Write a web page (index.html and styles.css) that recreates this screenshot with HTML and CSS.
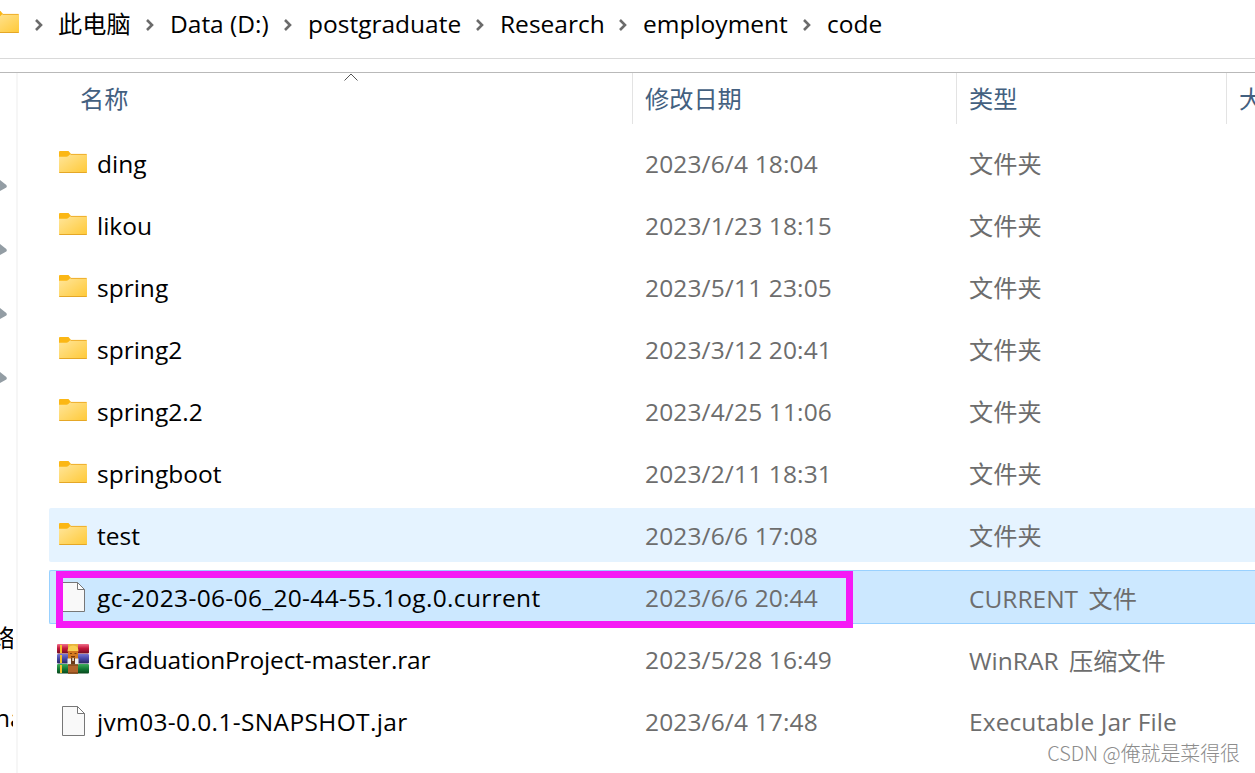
FILE: index.html
```html
<!DOCTYPE html>
<html lang="zh-CN">
<head>
    <meta charset="UTF-8">
    <title>code</title>
    <link rel="stylesheet" href="styles.css">
</head>
<body>
    <svg class="defs" width="0" height="0">
        <defs>
            <linearGradient id="folderFill" x1="0" y1="0" x2="1" y2="1">
                <stop offset="0" stop-color="#ffe69c"/>
                <stop offset="1" stop-color="#ffc937"/>
            </linearGradient>
            <linearGradient id="bookRed" x1="0" y1="0" x2="0" y2="1">
                <stop offset="0" stop-color="#f0708a"/>
                <stop offset="0.45" stop-color="#c4183c"/>
                <stop offset="1" stop-color="#6e0c20"/>
            </linearGradient>
            <linearGradient id="bookBlue" x1="0" y1="0" x2="0" y2="1">
                <stop offset="0" stop-color="#7676d2"/>
                <stop offset="0.5" stop-color="#4545a5"/>
                <stop offset="1" stop-color="#26265c"/>
            </linearGradient>
            <linearGradient id="bookGreen" x1="0" y1="0" x2="0" y2="1">
                <stop offset="0" stop-color="#3fae5c"/>
                <stop offset="0.5" stop-color="#137a35"/>
                <stop offset="1" stop-color="#07461c"/>
            </linearGradient>
        </defs>
        <symbol id="folder" viewBox="0 0 32 32">
            <path d="M2 15V5.5Q2 5 3 5h8.5l2.5 3-2.5 3z" fill="#fbb715"/>
            <path d="M2 10.7h7.5q1 0 1.8-.8l1.3-1.2q.7-.7 1.6-.7H29q1 0 1 1v17q0 1-1 1H3q-1 0-1-1z" fill="url(#folderFill)"/>
            <path d="M13.5 8.4H29.6" stroke="#efae2b" stroke-width="1"/>
            <path d="M2.3 26.5h27.4" stroke="#e5a726" stroke-width="1"/>
        </symbol>
        <symbol id="file" viewBox="0 0 32 32">
            <path d="M5.5 2.5h15l7 7v22h-22z" fill="#f9f9f9" stroke="#777" stroke-width="1"/>
            <path d="M20.5 2.5v7h7z" fill="#fff" stroke="#777" stroke-width="1"/>
        </symbol>
        <symbol id="rar" viewBox="0 0 32 32">
            <rect x="0" y="2" width="32" height="9.6" rx="1" fill="url(#bookRed)"/>
            <rect x="0" y="12" width="32" height="9.6" rx="1" fill="url(#bookBlue)"/>
            <rect x="0" y="22" width="32" height="9.6" rx="1" fill="url(#bookGreen)"/>
            <path d="M4 3v8M4 13v8M4 23v8" stroke="#f5c02c" stroke-width="2"/>
            <path d="M11 2h10v5h-10z" fill="#e8b33d"/>
            <path d="M10.5 9.5q0-6 5.500-6t5.500 6z" fill="#f9cf54"/>
            <path d="M11 9h10v8h-10z" fill="#d57a1f"/>
            <path d="M13 11.500h2M17.500 11.500h2M14 14.500h4" stroke="#7a3a0c" stroke-width="1.1"/>
            <path d="M10.500 16.500h11v6h-11z" fill="#eee"/>
            <path d="M14 15.500h4v7h-4z" fill="#6b3a1a"/>
            <path d="M15.300 16h1.600v3h-1.600z" fill="#f0e2c8"/>
            <path d="M11 22.500h10v9.100h-10z" fill="#b0642c"/>
            <path d="M11 23h10M11 31h10" stroke="#75390f" stroke-width="1"/>
        </symbol>
        <symbol id="chevron" viewBox="0 0 10 14">
            <path d="M2 2l5 5-5 5" fill="none" stroke="#6b6b6b" stroke-width="2.6"/>
        </symbol>
    </svg>

    <nav class="address">
        <svg class="address-icon"><use href="#folder"/></svg>
        <svg class="chevron"><use href="#chevron"/></svg>
        <span class="crumb crumb-pc zh">此电脑</span>
        <svg class="chevron"><use href="#chevron"/></svg>
        <span class="crumb crumb-drive">Data (D:)</span>
        <svg class="chevron"><use href="#chevron"/></svg>
        <span class="crumb crumb-post">postgraduate</span>
        <svg class="chevron"><use href="#chevron"/></svg>
        <span class="crumb crumb-research">Research</span>
        <svg class="chevron"><use href="#chevron"/></svg>
        <span class="crumb crumb-job">employment</span>
        <svg class="chevron"><use href="#chevron"/></svg>
        <span class="crumb">code</span>
    </nav>

    <div class="main">
        <aside class="sidebar">
            <div class="pins">
                <svg class="pin" viewBox="0 0 8 14"><path d="M0 1l6.300 5q1.200 1.200 0 2.500L0 12z"/></svg>
                <svg class="pin" viewBox="0 0 8 14"><path d="M0 1l6.300 5q1.200 1.200 0 2.500L0 12z"/></svg>
                <svg class="pin" viewBox="0 0 8 14"><path d="M0 1l6.300 5q1.200 1.200 0 2.500L0 12z"/></svg>
                <svg class="pin" viewBox="0 0 8 14"><path d="M0 1l6.300 5q1.200 1.200 0 2.500L0 12z"/></svg>
            </div>
            <div class="side-item side-item-net zh">络</div>
            <div class="side-item side-item-na">na</div>
        </aside>

        <section class="files">
            <div class="head zh">
                <div class="head-cell head-name">名称
                    <svg class="sort" viewBox="0 0 14 8"><path d="M.5 7.500L7 1l6.500 6.500"/></svg>
                </div>
                <div class="head-cell">修改日期</div>
                <div class="head-cell">类型</div>
                <div class="head-cell">大</div>
            </div>

            <div class="rows">
                <div class="row">
                    <svg class="icon"><use href="#folder"/></svg>
                    <span class="name">ding</span>
                    <span class="date">2023/6/4 18:04</span>
                    <span class="type zh">文件夹</span>
                </div>
                <div class="row">
                    <svg class="icon"><use href="#folder"/></svg>
                    <span class="name">likou</span>
                    <span class="date">2023/1/23 18:15</span>
                    <span class="type zh">文件夹</span>
                </div>
                <div class="row">
                    <svg class="icon"><use href="#folder"/></svg>
                    <span class="name">spring</span>
                    <span class="date">2023/5/11 23:05</span>
                    <span class="type zh">文件夹</span>
                </div>
                <div class="row">
                    <svg class="icon"><use href="#folder"/></svg>
                    <span class="name">spring2</span>
                    <span class="date">2023/3/12 20:41</span>
                    <span class="type zh">文件夹</span>
                </div>
                <div class="row">
                    <svg class="icon"><use href="#folder"/></svg>
                    <span class="name">spring2.2</span>
                    <span class="date">2023/4/25 11:06</span>
                    <span class="type zh">文件夹</span>
                </div>
                <div class="row">
                    <svg class="icon"><use href="#folder"/></svg>
                    <span class="name">springboot</span>
                    <span class="date">2023/2/11 18:31</span>
                    <span class="type zh">文件夹</span>
                </div>
                <div class="row hover">
                    <svg class="icon"><use href="#folder"/></svg>
                    <span class="name">test</span>
                    <span class="date">2023/6/6 17:08</span>
                    <span class="type zh">文件夹</span>
                </div>
                <div class="row selected">
                    <svg class="icon"><use href="#file"/></svg>
                    <span class="name name-wide">gc-2023-06-06_20-44-55.1og.0.current</span>
                    <span class="date">2023/6/6 20:44</span>
                    <span class="type type-mixed">CURRENT <span class="zh">文件</span></span>
                    <div class="marker"></div>
                </div>
                <div class="row">
                    <svg class="icon"><use href="#rar"/></svg>
                    <span class="name name-tight">GraduationProject-master.rar</span>
                    <span class="date">2023/5/28 16:49</span>
                    <span class="type type-mixed">WinRAR <span class="zh">压缩文件</span></span>
                </div>
                <div class="row">
                    <svg class="icon"><use href="#file"/></svg>
                    <span class="name name-wide">jvm03-0.0.1-SNAPSHOT.jar</span>
                    <span class="date">2023/6/4 17:48</span>
                    <span class="type type-latin">Executable Jar File</span>
                </div>
            </div>
        </section>
    </div>

    <div class="watermark">CSDN @俺就是菜得很</div>
</body>
</html>
```

FILE: styles.css
```css
* {
    box-sizing: border-box;
}
body {
    margin: 0;
    width: 1255px;
    height: 773px;
    overflow: hidden;
    position: relative;
    background: #fff;
    color: #000;
    font-family: "Open Sans", "Noto Sans CJK SC", sans-serif;
    font-size: 24.5px;
    line-height: 34px;
    white-space: nowrap;
}
.defs {
    position: absolute;
}
.zh {
    font-family: "Noto Sans CJK SC", sans-serif;
    font-size: 24.2px;
    font-weight: 400;
    letter-spacing: 0;
}

/* address bar */
.address {
    display: flex;
    align-items: center;
    height: 59px;
    padding-bottom: 10px;
    border-bottom: 1px solid #d9d9d9;
}
.address-icon {
    flex: none;
    width: 32px;
    height: 32px;
    margin-left: -11px;
    margin-top: -5px;
}
.chevron {
    flex: none;
    width: 10px;
    height: 14px;
    margin: 1px 15px 0 13px;
}
.crumb {
    flex: none;
}
.crumb-pc {
    width: 74px;
    margin: -2px 0 0 -1px;
}
.crumb-drive {
    width: 100px;
}
.crumb-post {
    width: 154px;
}
.crumb-research {
    width: 105px;
}
.crumb-job {
    width: 146px;
}

.main {
    display: flex;
    height: 701px;
    margin-top: 13px;
    border-top: 1px solid #b9b9b9;
}

/* navigation pane */
.sidebar {
    flex: none;
    width: 18px;
    padding-right: 3px;
    padding-top: 106px;
    border-right: 2px solid #f6f6f6;
}
.pins {
    display: flex;
    flex-direction: column;
    gap: 50px;
    height: 441px;
}
.pin {
    flex: none;
    width: 8px;
    height: 14px;
    fill: #939da4;
}
.side-item {
    width: 13px;
    height: 34px;
    overflow: hidden;
}
.side-item-net {
    margin-bottom: 47px;
    text-indent: -9px;
}
.side-item-na {
    text-indent: -5px;
}

/* file list */
.files {
    flex: 1;
    padding-left: 31px;
    min-width: 0;
}
.head,
.row {
    display: grid;
    grid-template-columns: 583px 324px 270px minmax(0, 1fr);
}
.head {
    height: 51px;
    color: #43607f;
}
.head-cell {
    padding: 8px 0 0 12px;
    border-left: 1px solid #e3e3e3;
    overflow: hidden;
}
.head-name {
    position: relative;
    padding-left: 31px;
    border-left: none;
}
.sort {
    position: absolute;
    left: 295px;
    top: 0;
    width: 14px;
    height: 8px;
    fill: none;
    stroke: #555;
}
.rows {
    display: flex;
    flex-direction: column;
    gap: 8px;
    padding-top: 12px;
}
.row {
    position: relative;
    height: 54px;
    grid-template-columns: 32px 548px 324px 1fr;
    padding-left: 7px;
    align-items: center;
    border: 1px solid transparent;
    border-right: none;
    border-radius: 2px 0 0 2px;
}
.name,
.date,
.type-mixed,
.type-latin {
    padding-top: 2px;
}
.row .name,
.row .date,
.row .type {
    padding-left: 8px;
}
.icon {
    width: 32px;
    height: 32px;
    margin-top: -3px;
}
.name-wide {
    letter-spacing: 0.35px;
}
.name-tight {
    letter-spacing: -0.17px;
}
.date,
.type {
    color: #6d6d6d;
}
.date {
    letter-spacing: 0.14px;
}
.type-mixed {
    word-spacing: 4px;
}
.type-latin {
    letter-spacing: 0.1px;
}
.hover {
    background: #e5f3ff;
}
.selected {
    background: #cce8ff;
    border-color: #99d1ff;
}
.marker {
    position: absolute;
    left: 6px;
    top: 0;
    width: 797px;
    height: 57px;
    border: 7px solid #f51af5;
}
.watermark {
    position: absolute;
    right: 15px;
    bottom: 5px;
    line-height: 30px;
    font-family: "Noto Sans CJK SC", sans-serif;
    font-size: 19.9px;
    font-weight: 300;
    color: #8c8c8c;
}
```
